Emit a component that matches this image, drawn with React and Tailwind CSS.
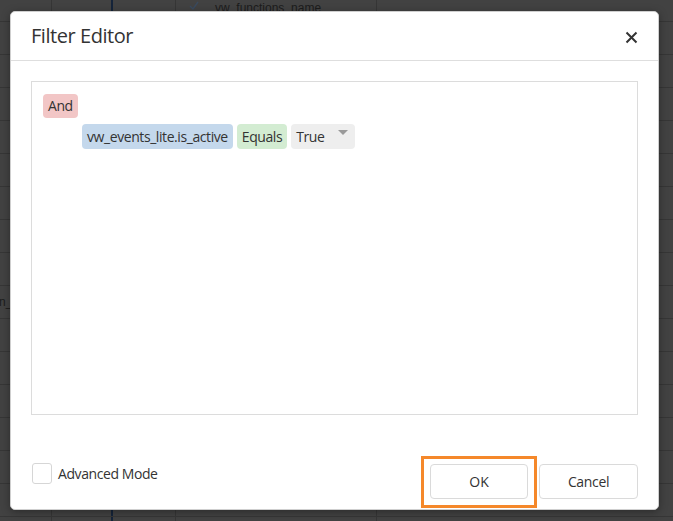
import React from "react";

const font = { fontFamily: '"Open Sans", "Noto Sans", Arial, sans-serif' };

function BackdropTable() {
  const rows = Array.from({ length: 17 });
  return (
    <div className="absolute inset-0 overflow-hidden bg-[#424242]">
      <div className="-mt-[11px] flex flex-col">
        {rows.map((_, i) => (
          <div key={i} className="flex h-[33px] border-b border-[#363636] text-[12px] text-[#1c1c1c]" style={{ fontFamily: '"Liberation Sans", Arial, sans-serif' }}>
            <div className="w-[52px] shrink-0 border-r border-[#363636] flex items-center">
              {i === 9 && <span className="-ml-[1px]">n_</span>}
            </div>
            <div className="w-[61px] shrink-0 border-r-2 border-[#15243a]" />
            <div className="w-[63px] shrink-0 border-r border-[#363636]" />
            <div className="w-[201px] shrink-0 border-r border-[#363636] flex items-center">
              {i === 0 && (
                <>
                  <span className="ml-[13px] w-[10px] h-[10px] flex items-center justify-center">
                    <svg width="10" height="9" viewBox="0 0 10 9">
                      <path d="M1 5 L4 8 L9 1" fill="none" stroke="#3a4a5e" strokeWidth="1.4" />
                    </svg>
                  </span>
                  <span className="ml-[16px] mt-[6px]">vw_functions_name</span>
                </>
              )}
            </div>
            <div className="flex-1" />
          </div>
        ))}
      </div>
    </div>
  );
}

function Pill({ className, children }) {
  return (
    <span className={"inline-flex items-center rounded-[4px] px-[5px] text-[14px] tracking-[-0.42px] text-[#333] " + className}>
      {children}
    </span>
  );
}

export default function App() {
  return (
    <div className="relative w-[673px] h-[521px] overflow-hidden" style={font}>
      <BackdropTable />
      <div className="absolute left-[10px] top-[11px] w-[649px] h-[499px] rounded-[5px] bg-white border border-[#cfcfcf] shadow-[0_2px_8px_rgba(0,0,0,0.35)] flex flex-col">
        <div className="h-[49px] shrink-0 border-b border-[#dedede] flex items-center justify-between pl-[20px] pr-[20px]">
          <span className="text-[20px] tracking-[-0.45px] text-[#333] leading-none">Filter Editor</span>
          <svg width="13" height="13" viewBox="0 0 13 13" className="mt-[2px]">
            <path d="M1.5 1.5 L11.5 11.5 M11.5 1.5 L1.5 11.5" stroke="#333" strokeWidth="2" />
          </svg>
        </div>
        <div className="px-[20px] pt-[20px]">
          <div className="h-[334px] border border-[#dcdcdc] pl-[11px] pt-[11px]">
            <Pill className="h-[24px] bg-[#f2c6c6]">And</Pill>
            <div className="flex items-center gap-[4px] ml-[39px] mt-[6px]">
              <Pill className="h-[25px] bg-[#c4d8ec]">vw_events_lite.is_active</Pill>
              <Pill className="h-[25px] bg-[#d3ecd2]">Equals</Pill>
              <span className="inline-flex h-[25px] w-[64px] items-center justify-between rounded-[4px] bg-[#eeeeee] pl-[5px] pr-[7px] text-[14px] tracking-[-0.42px] text-[#333]">
                True
                <svg width="10" height="6" viewBox="0 0 10 6" className="-mt-[6px]">
                  <path d="M0 0 L10 0 L5 5 Z" fill="#9a9a9a" />
                </svg>
              </span>
            </div>
          </div>
        </div>
        <div className="mt-[41px] flex items-start justify-between pl-[21px] pr-[20px]">
          <label className="mt-[7px] flex items-center gap-[6px] text-[14px] tracking-[-0.42px] text-[#333]">
            <span className="w-[20px] h-[21px] rounded-[3px] border border-[#d6d6d6] bg-white" />
            Advanced Mode
          </label>
          <div className="flex items-start gap-[2px]">
            <div className="border-[3px] border-[#f5882a] px-[6px] pt-[5px] pb-[6px]">
              <button className="block w-[98px] h-[35px] rounded-[4px] border border-[#dadada] bg-white text-[14px] text-[#333]">OK</button>
            </div>
            <button className="mt-[8px] w-[99px] h-[35px] rounded-[4px] border border-[#dadada] bg-white text-[14px] tracking-[-0.35px] text-[#333]">Cancel</button>
          </div>
        </div>
      </div>
    </div>
  );
}
